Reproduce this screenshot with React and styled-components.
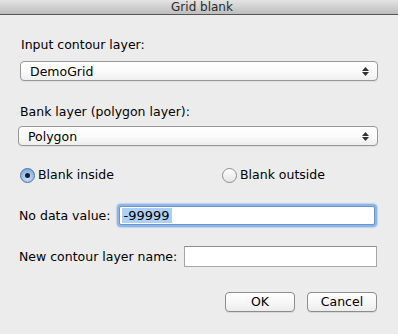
import React from "react";
import styled, { createGlobalStyle } from "styled-components";

const Global = createGlobalStyle`
  html, body { margin: 0; padding: 0; background: #ececec; }
  body { font-family: "DejaVu Sans", "Liberation Sans", sans-serif; }
`;

const Window = styled.div`
  width: 398px;
  height: 334px;
  background: #ececec;
  display: flex;
  flex-direction: column;
  overflow: hidden;
  color: #000;
  font-size: 12.5px;
`;

const TitleBar = styled.div`
  height: 14px;
  border-bottom: 1px solid #555;
  background: linear-gradient(#e4e4e4, #bdbdbd);
  display: flex;
  justify-content: center;
  align-items: center;
  font-size: 12px;
  line-height: 14px;
  color: #2a2a2a;
  padding-left: 6px;
`;

const Body = styled.div`
  display: flex;
  flex-direction: column;
  padding: 22px 20px 0 20px;
`;

const Label = styled.div`
  line-height: 16px;
  height: 16px;
  margin-top: ${(p) => p.$mt || 0}px;
  margin-left: ${(p) => p.$ml || 0}px;
`;

const Popup = styled.div`
  margin-top: ${(p) => p.$mt || 0}px;
  margin-left: ${(p) => p.$ml || 0}px;
  height: 18px;
  border: 1px solid #989898;
  border-radius: 4px;
  background: linear-gradient(#ffffff, #fbfbfb 50%, #eeeeee);
  display: flex;
  align-items: center;
  justify-content: space-between;
  padding: 0 8px 0 9px;
  box-shadow: 0 1px 0 rgba(0,0,0,0.06);
`;

const Arrows = styled.div`
  display: flex;
  flex-direction: column;
  align-items: center;
  gap: 1px;
`;

const RadioRow = styled.div`
  margin-top: 21px;
  display: grid;
  grid-template-columns: 202px 1fr;
  height: 16px;
  align-items: center;
`;

const Radio = styled.div`
  display: flex;
  align-items: center;
  gap: 3px;
  line-height: 16px;
`;

const Circle = styled.div`
  width: 13px;
  height: 13px;
  border-radius: 50%;
  border: 1px solid ${(p) => (p.$on ? "#5a6f9a" : "#8e8e8e")};
  background: ${(p) =>
    p.$on
      ? "radial-gradient(circle at 50% 70%, #c8e2fb, #8fb9ea 60%, #6a96d4)"
      : "linear-gradient(#fdfdfd, #e6e6e6)"};
  display: flex;
  align-items: center;
  justify-content: center;
`;

const Dot = styled.div`
  width: 5px;
  height: 5px;
  border-radius: 50%;
  background: #1a1a2a;
`;

const FieldRow = styled.div`
  margin-top: ${(p) => p.$mt}px;
  display: flex;
  align-items: center;
  gap: ${(p) => p.$gap}px;
  margin-left: -1px;
`;

const Field = styled.div`
  flex: 1;
  height: ${(p) => (p.$focus ? 17 : 19)}px;
  background: #fff;
  border: 1px solid ${(p) => (p.$focus ? "#6d95c8" : "#a5a5a5")};
  border-top-color: ${(p) => (p.$focus ? "#6d95c8" : "#8f8f8f")};
  box-shadow: ${(p) => (p.$focus ? "0 0 0 2px #8fb5e6, 0 0 1px 3px #bcd3ef" : "none")};
  border-radius: ${(p) => (p.$focus ? 2 : 0)}px;
  margin: ${(p) => (p.$focus ? "0 3px 0 3px" : "0 1px 0 0")};
  display: flex;
  align-items: center;
  padding-left: 2px;
`;

const Selected = styled.span`
  background: #aed0f7;
  line-height: 15px;
  padding: 0 2px 0 1px;
  font-size: 13px;
`;

const Buttons = styled.div`
  margin-top: 25px;
  display: flex;
  justify-content: flex-end;
  gap: 12px;
  padding-right: 1px;
`;

const Button = styled.div`
  width: 68px;
  height: 18px;
  border: 1px solid #8c8c8c;
  border-radius: 4px;
  background: linear-gradient(#ffffff, #f7f7f7 50%, #ececec);
  display: flex;
  align-items: center;
  justify-content: center;
  line-height: 18px;
  box-shadow: 0 1px 0 rgba(0,0,0,0.08);
`;

const UpDown = () => (
  <Arrows>
    <svg width="7" height="4" viewBox="0 0 7 4"><polygon points="3.5,0 7,4 0,4" fill="#333" /></svg>
    <svg width="7" height="4" viewBox="0 0 7 4"><polygon points="0,0 7,0 3.5,4" fill="#333" /></svg>
  </Arrows>
);

export default function App() {
  return (
    <Window>
      <Global />
      <TitleBar>Grid blank</TitleBar>
      <Body>
        <Label $ml={1}>Input contour layer:</Label>
        <Popup $mt={8}>
          <span>DemoGrid</span>
          <UpDown />
        </Popup>
        <Label $mt={23}>Bank layer (polygon layer):</Label>
        <Popup $mt={6} $ml={-2}>
          <span>Polygon</span>
          <UpDown />
        </Popup>
        <RadioRow>
          <Radio>
            <Circle $on><Dot /></Circle>
            <span>Blank inside</span>
          </Radio>
          <Radio>
            <Circle />
            <span>Blank outside</span>
          </Radio>
        </RadioRow>
        <FieldRow $mt={23} $gap={6}>
          <span>No data value:</span>
          <Field $focus>
            <Selected>-99999</Selected>
          </Field>
        </FieldRow>
        <FieldRow $mt={21} $gap={7}>
          <span>New contour layer name:</span>
          <Field />
        </FieldRow>
        <Buttons>
          <Button>OK</Button>
          <Button>Cancel</Button>
        </Buttons>
      </Body>
    </Window>
  );
}
